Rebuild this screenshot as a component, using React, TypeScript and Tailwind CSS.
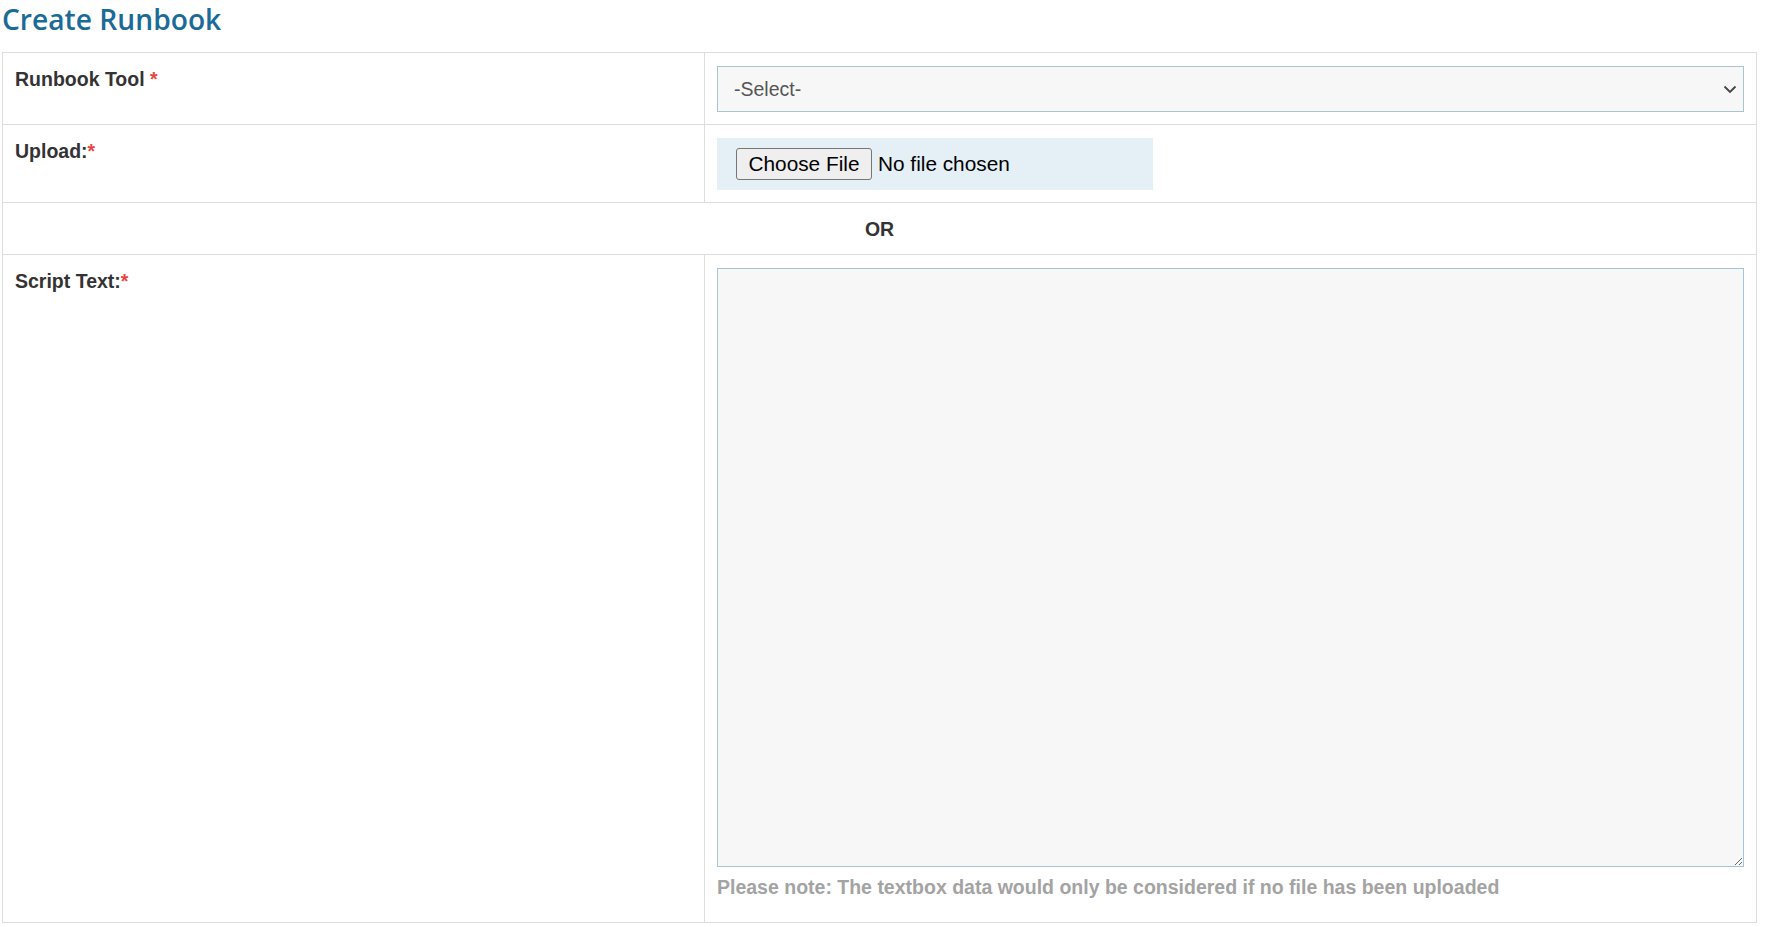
import React from "react";

function Req() {
  return <span className="text-[#e8453c]">*</span>;
}

export default function App() {
  return (
    <div className="w-[1767px] bg-white pl-[2px] font-['Liberation_Sans',Arial,sans-serif] text-[#333]">
      <h1 className="m-0 font-['Open_Sans',sans-serif] text-[28.2px] font-semibold leading-[39px] text-[#1b6a98] mb-[13px]">
        Create Runbook
      </h1>
      <table className="w-[1755px] border-collapse border border-[#dddddd] text-[19.5px] leading-[26px]">
        <tbody>
          <tr className="border-b border-[#dddddd]">
            <td className="w-[702px] border-r border-[#dddddd] px-[12px] pt-[13px] pb-[12px] align-top font-bold">
              Runbook Tool <Req />
            </td>
            <td className="px-[12px] pt-[13px] pb-[12px] align-top">
              <div className="relative">
                <select
                  className="box-border block h-[46px] w-full appearance-none border border-[#a8c4cf] bg-[#f7f7f7] pl-[16px] text-[19.5px] text-[#555] outline-none"
                  defaultValue=""
                >
                  <option value="">-Select-</option>
                </select>
                <svg
                  className="pointer-events-none absolute right-[7px] top-[19px]"
                  width="14"
                  height="9"
                  viewBox="0 0 14 9"
                  fill="none"
                >
                  <polyline points="1.5,1.5 7,7 12.5,1.5" stroke="#444" strokeWidth="1.8" />
                </svg>
              </div>
            </td>
          </tr>
          <tr className="border-b border-[#dddddd]">
            <td className="border-r border-[#dddddd] px-[12px] pt-[13px] pb-[12px] align-top font-bold">
              Upload:<Req />
            </td>
            <td className="px-[12px] pt-[13px] pb-[12px] align-top">
              <div className="flex h-[52px] w-[436px] items-center bg-[#e4eff6] pl-[19px] text-[20.8px] text-black">
                <button
                  type="button"
                  className="box-border flex h-[32px] w-[136px] items-center justify-center rounded-[3px] border border-[#767676] bg-[#efefef] text-[20.8px] leading-none text-black"
                >
                  Choose File
                </button>
                <span className="ml-[6px] leading-none">No file chosen</span>
              </div>
            </td>
          </tr>
          <tr className="border-b border-[#dddddd]">
            <td colSpan={2} className="px-[12px] pt-[13px] pb-[12px] text-center font-bold">
              OR
            </td>
          </tr>
          <tr>
            <td className="border-r border-[#dddddd] px-[12px] pt-[13px] pb-[12px] align-top font-bold">
              Script Text:<Req />
            </td>
            <td className="px-[12px] pt-[13px] pb-[12px] align-top">
              <textarea className="box-border block h-[599px] w-full border border-[#a3c6d3] bg-[#f7f7f7] outline-none" />
              <div className="mt-[7px] mb-[10px] font-bold text-[#a3a3a3]">
                Please note: The textbox data would only be considered if no file has been uploaded
              </div>
            </td>
          </tr>
        </tbody>
      </table>
    </div>
  );
}
